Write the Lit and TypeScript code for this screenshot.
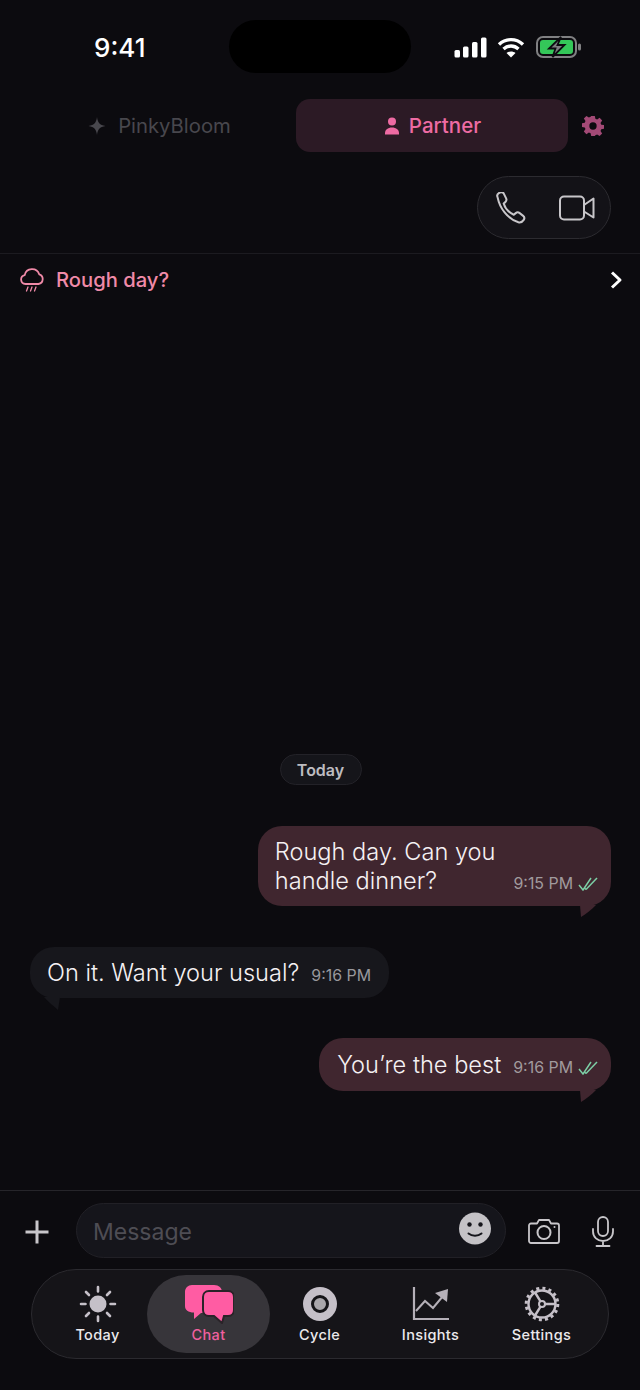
import { LitElement, html, css, svg } from "lit";
import { customElement } from "lit/decorators.js";

const checks = svg`<svg class="checks" width="20" height="14" viewBox="0 0 20 14" fill="none" stroke="#7ccfa6" stroke-width="1.500"><path d="M1 8l4 5L13 1"/><path d="M8 12.500L19 1"/><path d="M6.500 11l1.500 1.500"/></svg>`;

@customElement("app-root")
export class AppRoot extends LitElement {
  static styles = css`
    :host { display: block; width: 640px; height: 1390px; background: #0c0b0f; color: #fff; font-family: Inter, "Liberation Sans", sans-serif; overflow: hidden; }
    * { box-sizing: border-box; }
    svg { display: block; flex: none; }
    .page { height: 1390px; display: flex; flex-direction: column; }
    .status { height: 99px; flex: none; display: grid; grid-template-columns: 229px 182px 1fr; padding-top: 20px; align-items: start; }
    .time { font-size: 26px; font-weight: 500; line-height: 53px; padding: 1px 0 0 94px; }
    .island { height: 53px; background: #000; border-radius: 27px; }
    .sys { display: flex; align-items: center; height: 53px; padding: 1px 0 0 43px; gap: 10px; }
    .batt { margin-left: 1px; }
    .seg { height: 53px; flex: none; display: flex; align-items: center; padding-left: 20px; }
    .tab { height: 53px; display: flex; align-items: center; justify-content: center; gap: 9px; font-size: 20.5px; font-weight: 500; }
    .tab.off { width: 276px; color: #48474d; font-weight: 400; gap: 12px; padding-left: 3px; font-size: 20.3px; }
    .tab.on { width: 272px; background: #2c1a25; border-radius: 14px; color: #ee6ba3; padding-left: 1px; }
    .gear { margin-left: 14px; }
    .callrow { height: 102px; flex: none; padding: 24px 29px 0 0; display: flex; justify-content: flex-end; align-items: flex-start; border-bottom: 1px solid #1c1b20; }
    .call { width: 134px; height: 63px; border: 1.5px solid #2c2b30; background: #131217; border-radius: 32px; display: flex; align-items: center; padding-left: 17.500px; gap: 31px; }
    .banner { height: 51px; flex: none; display: flex; align-items: center; padding: 0 17px 0 20px; color: #f08aa8; font-size: 20.2px; font-weight: 500; }
    .banner span { margin-left: 12px; flex: 1; }
    .msgs { flex: 1; display: flex; flex-direction: column; padding: 0 29px 99px 30px; justify-content: flex-end; }
    .date { align-self: center; width: 82px; height: 31px; border-radius: 16px; border: 1px solid #232228; background: #15151a; color: #bdbcc0; font-size: 16px; font-weight: 600; display: flex; align-items: center; justify-content: center; margin-bottom: 41px; }
    .b { position: relative; font-size: 23.6px; line-height: 29px; color: #f5f1f3; font-weight: 350; border-radius: 24px; display: flex; align-items: flex-end; }
    .out { align-self: flex-end; background: #40262f; padding: 11px 13px 11px 17px; }
    .out.tall { padding: 12px 13px 12px 18px; }
    .in { align-self: flex-start; background: #17171c; padding: 11px 18px 11px 17px; margin: 41px 0 40px; }
    .meta { display: flex; align-items: center; gap: 5px; font-size: 15.9px; font-weight: 400; line-height: 20px; color: #a09a9d; margin-left: 12px; white-space: nowrap; padding-bottom: 1px; }
    .in .meta { color: #98989c; }
    .t1 { margin-left: 18px; }
    .tail { position: absolute; top: 100%; margin-top: -1px; }
    .out .tail { right: 15px; }
    .in .tail { left: 14px; }
    .composer { height: 79px; flex: none; border-top: 1px solid #26252a; display: flex; align-items: center; padding: 0 0 0 24px; }
    .plus { margin-top: 3px; }
    .field { margin-left: 26px; width: 430px; height: 55px; border-radius: 28px; border: 1.5px solid #212026; background: #15151b; display: flex; align-items: center; justify-content: space-between; padding: 0 14px 0 16px; color: #4e4d54; font-size: 23px; }
    .field span { padding-top: 3px; }
    .emoji { margin-top: -3px; }
    .cam { margin: 3px 0 0 22px; }
    .mic { margin: 3px 0 0 32px; }
    .navwrap { height: 121px; flex: none; padding-left: 31px; }
    .nav { width: 578px; height: 90px; border-radius: 45px; border: 1.5px solid #2b2a2f; background: #151418; display: grid; grid-template-columns: repeat(5, 111px); padding: 0 10px; align-items: center; }
    .item { position: relative; isolation: isolate; height: 78px; display: flex; flex-direction: column; align-items: center; font-size: 14.5px; font-weight: 500; color: #ebe9ec; letter-spacing: .35px; }
    .ic { height: 51px; flex: none; display: flex; align-items: center; justify-content: center; padding-top: 7px; }
    .item.on { color: #f0609f; }
    .item.on::before { content: ""; position: absolute; z-index: -1; inset: 0 -6px; background: #37353a; border-radius: 39px; }
  `;

  render() {
    return html`<div class="page">
      <div class="status">
        <div class="time">9:41</div>
        <div class="island"></div>
        <div class="sys">
          <svg width="33" height="21" viewBox="0 0 33 21" fill="#fff"><rect x="0.5" y="13" width="5.5" height="7.500" rx="1.5"/><rect x="9" y="9.500" width="5.5" height="11" rx="1.5"/><rect x="18" y="5" width="5.5" height="15.5" rx="1.5"/><rect x="27" y="0.5" width="5.5" height="20" rx="1.5"/></svg>
          <svg width="28" height="21" viewBox="0 0 28 21" fill="none" stroke="#fff" stroke-width="3.400"><path d="M2 7.500C9 1 19 1 26 7.500"/><path d="M6.500 12c4.500-4 10.500-4 15 0"/><path d="M14 20.500l-4.500-4.500c2.500-2 6.500-2 9 0z" fill="#fff" stroke="none"/></svg>
          <svg class="batt" width="46" height="22" viewBox="0 0 46 22"><rect x="1" y="1" width="39" height="20" rx="6" fill="none" stroke="#808082" stroke-width="2"/><rect x="4" y="4" width="33" height="14" rx="3" fill="#34c759"/><rect x="42" y="7.500" width="3" height="7" rx="1.500" fill="#808082"/><path d="M25 1L13 12.500h6.500L16.500 21l12-12h-7z" fill="#7d7d80" stroke="#0c0b10" stroke-width="1.800"/></svg>
        </div>
      </div>
      <div class="seg">
        <div class="tab off">
          <svg width="18" height="18" viewBox="0 0 18 18" fill="#48474d"><path d="M9 0c.7 5.500 2.500 8 8.500 9-6 1-7.800 3.500-8.500 9-.7-5.500-2.500-8-8.500-9C6.500 8 8.300 5.500 9 0z"/></svg>
          PinkyBloom
        </div>
        <div class="tab on">
          <svg width="16" height="18" viewBox="0 0 16 18" fill="#ee6ba3"><circle cx="8" cy="4.500" r="4"/><path d="M1 17.500c-.5-5 3-7 7-7s7.500 2 7 7z"/></svg>
          Partner
        </div>
        <svg class="gear" width="22" height="22" viewBox="0 0 24 24" fill="#a34a76"><path fill-rule="evenodd" d="M10 1h4l.6 3.100 1.900.8 2.700-1.800 2.800 2.800-1.800 2.700.8 1.900 3 .5v4l-3 .6-.8 1.900 1.800 2.700-2.800 2.800-2.700-1.800-1.900.8L14 23h-4l-.6-3.100-1.900-.8-2.700 1.800L2 18.100l1.800-2.700-.8-1.900-3-.5V9l3-.6.8-1.900L2 3.800 4.800 1l2.700 1.800 1.900-.8zM12 8a4 4 0 1 0 0 8 4 4 0 0 0 0-8z"/></svg>
      </div>
      <div class="callrow">
        <div class="call">
          <svg width="32" height="32" viewBox="3 2 29 30" fill="none" stroke="#c8c6ca" stroke-width="1.900" stroke-linejoin="round"><path d="M4 7c-1-2 0-3.500 2-4.500 1.800-.8 3-.6 3.800 1l2.200 4.500c.7 1.500.3 2.500-.8 3.500l-1.500 1.300c1.200 4 5 8.500 9.500 10.500l1.800-1.500c1.200-1 2.300-1 3.400-.2l3.300 2.500c1.600 1.200 1.800 2.500.8 4-1.300 2-3 2.800-5 2.300C13 27 6 17 4 7z"/></svg>
          <svg width="36" height="26" viewBox="0 0 36 26" fill="none" stroke="#c8c6ca" stroke-width="2" stroke-linejoin="round"><rect x="1" y="1.500" width="24" height="23" rx="4"/><path d="M25 10l9.500-6.500v19L25 16.500"/></svg>
        </div>
      </div>
      <div class="banner">
        <svg width="24" height="24" viewBox="0 0 24 24" fill="none" stroke="#f08aa8" stroke-width="1.800" stroke-linecap="round" stroke-linejoin="round"><path d="M7 16H5.500a4.500 4.500 0 0 1-.8-8.900 7.500 7.500 0 0 1 14.500-.8A5 5 0 0 1 18.500 16z"/><path d="M8 19l-1.500 4M12 19l-1.500 4M16 19l-1.500 4" stroke-width="1.300"/></svg>
        <span>Rough day?</span>
        <svg width="14" height="20" viewBox="0 0 14 20" fill="none" stroke="#fff" stroke-width="3" stroke-linejoin="round"><path d="M3 2.500l8 7.500-8 7.500"/></svg>
      </div>
      <div class="msgs">
        <div class="date">Today</div>
        <div class="b out">
          <div>Rough day. Can you<br />handle dinner?</div>
          <div class="meta t1">9:15 PM ${checks}</div>
          <svg class="tail" width="16" height="12" viewBox="0 0 16 12" fill="#40262f"><path d="M0 0h16C12 4 6 9 1 12z"/></svg>
        </div>
        <div class="b in">
          <div>On it. Want your usual?</div>
          <div class="meta">9:16 PM</div>
          <svg class="tail" width="16" height="13" viewBox="0 0 16 13" fill="#17171c"><path d="M0 0h16l-2 13C10 9 4 5 0 0z"/></svg>
        </div>
        <div class="b out tall">
          <div>You’re the best</div>
          <div class="meta">9:16 PM ${checks}</div>
          <svg class="tail" width="16" height="12" viewBox="0 0 16 12" fill="#40262f"><path d="M0 0h16C12 4 6 9 1 12z"/></svg>
        </div>
      </div>
      <div class="composer">
        <svg class="plus" width="26" height="26" viewBox="0 0 26 26" stroke="#c8c6ca" stroke-width="3"><path d="M13 1.500v23M1.500 13h23"/></svg>
        <div class="field">
          <span>Message</span>
          <svg class="emoji" width="32" height="33" viewBox="0 0 32 33"><circle cx="16" cy="16.500" r="16" fill="#c4c2c6"/><circle cx="10.500" cy="12.500" r="2.200" fill="#15151b"/><circle cx="21.500" cy="12.500" r="2.200" fill="#15151b"/><path d="M9.500 21.500c3.500 3 9.500 3 13 0" fill="none" stroke="#15151b" stroke-width="2" stroke-linecap="round"/></svg>
        </div>
        <svg class="cam" width="32" height="25" viewBox="0 0 32 25" fill="none" stroke="#c8c6ca" stroke-width="1.800" stroke-linejoin="round"><path d="M3 4.500h6l2-3.500h10l2 3.500h6a2 2 0 0 1 2 2V22a2 2 0 0 1-2 2H3a2 2 0 0 1-2-2V6.500a2 2 0 0 1 2-2z"/><circle cx="16" cy="13.500" r="6.500" stroke-width="2"/><circle cx="26.500" cy="8" r="1" fill="#c8c6ca" stroke="none"/></svg>
        <svg class="mic" width="22" height="31" viewBox="0 0 22 31" fill="none" stroke="#c8c6ca" stroke-width="1.800" stroke-linecap="round"><rect x="6" y="1" width="10" height="19" rx="5"/><path d="M1 13v2.500C1 21 5.500 25 11 25s10-4 10-9.500V13M11 25v5M4.500 30h13"/></svg>
      </div>
      <div class="navwrap">
        <div class="nav">
          <div class="item">
            <div class="ic"><svg width="38" height="38" viewBox="0 0 38 38" fill="#c5c0c8"><circle cx="19" cy="19" r="8.500"/><g stroke="#c5c0c8" stroke-width="2.600" stroke-linecap="round"><path d="M19 2v4.500M19 31.500V36M2 19h4.500M31.500 19H36M7 7l3 3M28 28l3 3M7 31l3-3M28 10l3-3"/></g></svg></div>
            Today
          </div>
          <div class="item on">
            <div class="ic"><svg width="50" height="40" viewBox="0 0 50 40"><path d="M8 1h22c5 0 8 3 8 7v14c0 4-3 7-7 7H17l-7 6 0-6.500C4 28.500 1 26 1 22V8c0-4 3-7 7-7z" fill="#ff5ca3"/><path d="M25 7h19c4 0 6 3 6 6v13c0 3-2 6-6 6h-4l-2 7-8-7h-5c-4 0-6-3-6-6V13c0-3 2-6 6-6z" fill="#ff5ca3" stroke="#2a2328" stroke-width="2"/></svg></div>
            Chat
          </div>
          <div class="item">
            <div class="ic"><svg width="34" height="34" viewBox="0 0 34 34"><circle cx="17" cy="17" r="17" fill="#c5c0c8"/><circle cx="17" cy="17" r="7.500" fill="#a9a6ab" stroke="#151418" stroke-width="3"/></svg></div>
            Cycle
          </div>
          <div class="item">
            <div class="ic"><svg width="38" height="34" viewBox="0 0 38 34" fill="none" stroke="#b5b0b8" stroke-width="2.200"><path d="M2 0v32h35"/><path d="M4 24l9-10 8 7 10-12" stroke-width="2"/><path d="M23 6l13-4-1 13z" fill="#b5b0b8" stroke="none"/></svg></div>
            Insights
          </div>
          <div class="item">
            <div class="ic"><svg width="36" height="36" viewBox="0 0 36 36" fill="none" stroke="#c5c0c8"><circle cx="18" cy="18" r="13.500" stroke-width="2.400"/><circle cx="18" cy="18" r="15.800" stroke-width="3" stroke-dasharray="3 3.200"/><circle cx="18" cy="18" r="3" stroke-width="2"/><path d="M21 18h10M16.500 15.400L11 6.500M16.500 20.600L11 29.500" stroke-width="2.400"/></svg></div>
            Settings
          </div>
        </div>
      </div>
    </div>`;
  }
}
